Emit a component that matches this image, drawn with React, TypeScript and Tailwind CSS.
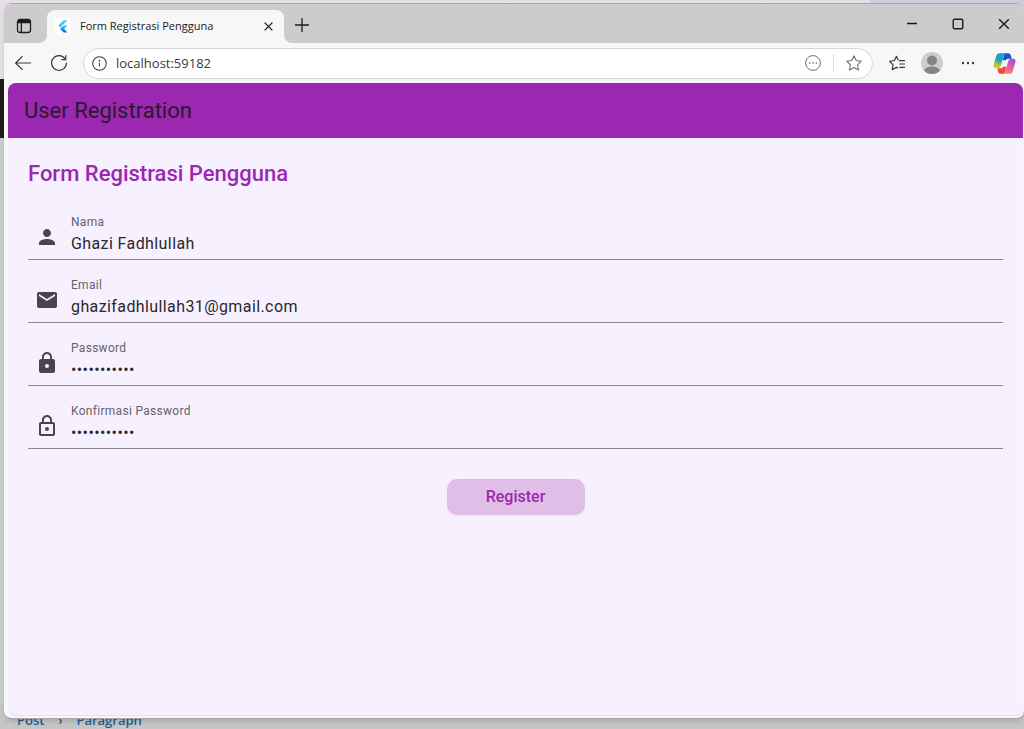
import { useState } from "react"
import type { ChangeEvent, ReactNode } from "react"
import { MdEmail, MdLock, MdLockOutline, MdPerson } from "react-icons/md"

interface FieldProps {
  id: string
  label: string
  type: string
  value: string
  icon: ReactNode
  onChange: (e: ChangeEvent<HTMLInputElement>) => void
}

const Field = ({ id, label, type, value, icon, onChange }: FieldProps) => {
  return (
    <div className="flex h-[50px] items-center border-b border-[#8d8893] text-[#49454f]">
      <span className="flex w-[43px] shrink-0 pl-[7px] pt-1">{icon}</span>
      <div className="flex min-w-0 flex-1 flex-col pt-[2px]">
        <label htmlFor={id} className="text-xs leading-4 tracking-wide text-[#665f6e]">{label}</label>
        <input id={id} name={id} type={type} value={value} onChange={onChange} autoComplete="off" className="h-[27px] w-full bg-transparent text-base tracking-wide text-[#2a272e] outline-none" />
      </div>
    </div>
  )
}

const FlutterLogo = () => (
  <svg viewBox="0 0 16 16" className="size-4 bg-white" aria-hidden="true">
    <path d="M8.700 2.200h3.800L5.200 9.500 3.300 7.600z" fill="#47c5fb" />
    <path d="M8.700 7.400h3.800l-3.500 3.500-1.900 1.900-1.900-1.900z" fill="#3db4f5" />
    <path d="M7.100 9l1.900 1.900-1.900 1.900-1.900-1.900z" fill="#1f8fe6" />
    <path d="M7.100 12.800L9 10.900l3.500 3.500H8.700z" fill="#0b6fc9" />
  </svg>
)

const CopilotLogo = () => (
  <svg viewBox="0 0 24 24" className="size-[23px]" aria-hidden="true">
    <defs>
      <linearGradient id="cpLeft" x1="0.6" y1="0" x2="0.3" y2="1">
        <stop offset="0" stopColor="#1a9be8" />
        <stop offset="0.45" stopColor="#25a3b8" />
        <stop offset="0.75" stopColor="#a3c43c" />
        <stop offset="1" stopColor="#f7c51e" />
      </linearGradient>
      <linearGradient id="cpRight" x1="0.7" y1="0" x2="0.3" y2="1">
        <stop offset="0" stopColor="#a04be8" />
        <stop offset="0.5" stopColor="#e85ba8" />
        <stop offset="1" stopColor="#fb8a5c" />
      </linearGradient>
    </defs>
    <path d="M12 1.200h3.600c1.700 0 2.500.8 2.900 2.300L19.600 7h-3.400c-1.600 0-2.500.6-3.100 1.600h-3z" fill="#1b52c9" />
    <path d="M12 22.800H8.400c-1.700 0-2.500-.8-2.900-2.300L4.400 17h3.400c1.600 0 2.500-.6 3.100-1.600h3z" fill="#f04a3c" />
    <path d="M6.800 1.200h6.600c-1.300.3-1.800 1.300-2.200 2.700L8.300 13.800c-.6 2-1.600 3.200-3.600 3.200H3C.8 17 .1 15.400.7 13.300L3.400 4c.6-1.800 1.500-2.800 3.400-2.800z" fill="url(#cpLeft)" />
    <path d="M17.200 22.800h-6.600c1.300-.3 1.800-1.300 2.200-2.700l2.900-9.900c.6-2 1.600-3.200 3.600-3.200H21c2.200 0 2.900 1.600 2.300 3.700L20.600 20c-.6 1.800-1.500 2.800-3.400 2.800z" fill="url(#cpRight)" />
  </svg>
)

const TitleBar = () => {
  return (
    <div className="flex h-[39px] shrink-0 items-end bg-[#cccccc] text-[#1b1b1b]">
      <div className="flex h-full w-[43px] items-stretch bg-[#f7f7f7]">
        <button type="button" aria-label="Tab actions" className="flex w-full items-center justify-center rounded-br-lg bg-[#cccccc] pr-1 pt-1">
          <svg viewBox="0 0 16 16" className="size-4" fill="none" stroke="currentColor" strokeWidth="1.300">
            <rect x="1.500" y="1.500" width="13" height="13" rx="2.500" />
            <path d="M2 3.500h12" strokeWidth="3.500" />
            <path d="M5.300 5v9.500" />
          </svg>
        </button>
      </div>
      <div className="flex h-[33px] w-[237px] items-center rounded-t-lg bg-[#f7f7f7] px-2 pb-px">
        <FlutterLogo />
        <span className="flex-1 truncate pl-[9px] text-[11px]">Form Registrasi Pengguna</span>
        <button type="button" aria-label="Close tab" className="flex size-4 items-center justify-center">
          <svg viewBox="0 0 10 10" className="size-[9px]" stroke="currentColor" strokeWidth="1.500">
            <path d="M.7.7l8.600 8.600M9.300.7L.7 9.300" />
          </svg>
        </button>
      </div>
      <div className="flex h-full flex-1 bg-[#f7f7f7]">
        <div className="flex flex-1 items-center justify-between rounded-bl-lg bg-[#cccccc] pl-[11px] pr-[14px]">
          <button type="button" aria-label="New tab" className="pt-[2px]">
            <svg viewBox="0 0 14 14" className="size-[14px]" stroke="currentColor" strokeWidth="1.300">
              <path d="M7 0v14M0 7h14" />
            </svg>
          </button>
          <div className="flex items-center gap-[34px]">
            <button type="button" aria-label="Minimize">
              <svg viewBox="0 0 12 12" className="size-3" stroke="currentColor" strokeWidth="1.400">
                <path d="M1 5.500h10" />
              </svg>
            </button>
            <button type="button" aria-label="Maximize">
              <svg viewBox="0 0 12 12" className="size-3" fill="none" stroke="currentColor" strokeWidth="1.400">
                <rect x="1.200" y="1.200" width="9.600" height="9.600" rx="1.500" />
              </svg>
            </button>
            <button type="button" aria-label="Close">
              <svg viewBox="0 0 12 12" className="size-3" stroke="currentColor" strokeWidth="1.400">
                <path d="M1.200 1.200l9.600 9.600M10.800 1.200l-9.600 9.600" />
              </svg>
            </button>
          </div>
        </div>
      </div>
    </div>
  )
}

const Toolbar = ({ url, onUrl }: { url: string; onUrl: (e: ChangeEvent<HTMLInputElement>) => void }) => {
  return (
    <div className="flex h-10 shrink-0 items-center bg-[#f7f7f7] pl-[11px] pr-2 text-[#3a3a3a]">
      <button type="button" aria-label="Back">
        <svg viewBox="0 0 16 16" className="size-4" fill="none" stroke="currentColor" strokeWidth="1.200">
          <path d="M7.500 1.200L.7 8l6.800 6.800M.7 8h15.300" />
        </svg>
      </button>
      <button type="button" aria-label="Refresh" className="ml-5">
        <svg viewBox="0 0 16 16" className="size-4" fill="none" stroke="currentColor" strokeWidth="1.200">
          <path d="M15.400 7.800A7.400 7.400 0 1 1 14 3.600M14.800.3v4.300h-4.300" />
        </svg>
      </button>
      <div className="ml-4 flex h-[31px] flex-1 items-center rounded-full border border-[#d6d6d6] bg-white px-2">
        <svg viewBox="0 0 16 16" className="size-[15px] shrink-0" fill="none" stroke="currentColor" strokeWidth="1.100" aria-hidden="true">
          <circle cx="8" cy="8" r="7.200" />
          <path d="M8 7.200v4" />
          <circle cx="8" cy="5" r=".4" />
        </svg>
        <input aria-label="Address" value={url} onChange={onUrl} className="ml-[9px] min-w-0 flex-1 bg-transparent pt-px text-[13px] outline-none" />
        <button type="button" aria-label="Page options" className="text-[#707070]">
          <svg viewBox="0 0 16 16" className="size-4" fill="none" stroke="currentColor">
            <circle cx="8" cy="8" r="7.400" />
            <path d="M4 8h1.400M7.300 8h1.400M10.600 8h1.400" strokeWidth="1.400" />
          </svg>
        </button>
        <span className="ml-3 h-[18px] w-px bg-[#dddddd]" />
        <button type="button" aria-label="Add to favorites" className="ml-3 mr-[2px] text-[#707070]">
          <svg viewBox="0 0 16 16" className="size-4" fill="none" stroke="currentColor" strokeWidth="1.100" strokeLinejoin="round">
            <path d="M8 .8l2.200 4.700 5.100.7-3.700 3.600.9 5.200L8 12.500 3.500 15l.9-5.200L.7 6.200l5.100-.7z" />
          </svg>
        </button>
      </div>
      <button type="button" aria-label="Favorites" className="ml-4">
        <svg viewBox="0 0 16 16" className="size-4" fill="none" stroke="currentColor" strokeWidth="1.200" strokeLinejoin="round">
          <path d="M9.300 5.300L7.500 1.300 5.400 5.500.6 6.300l3.500 3.500-.9 4.900 4.300-2.300 1.500.8M10 5.600h6M10.300 9h5.700M10.300 12.400h5.700" />
        </svg>
      </button>
      <button type="button" aria-label="Profile" className="ml-4">
        <svg viewBox="0 0 22 22" className="size-[22px]">
          <defs>
            <clipPath id="avatarClip"><circle cx="11" cy="11" r="11" /></clipPath>
          </defs>
          <circle cx="11" cy="11" r="11" fill="#cfcdca" />
          <g clipPath="url(#avatarClip)" fill="#868482">
            <circle cx="11" cy="8.500" r="5" />
            <ellipse cx="11" cy="19.500" rx="8" ry="5" />
          </g>
        </svg>
      </button>
      <button type="button" aria-label="Settings and more" className="ml-[17px]">
        <svg viewBox="0 0 16 16" className="size-4" fill="currentColor">
          <circle cx="3" cy="8" r="1.200" />
          <circle cx="8" cy="8" r="1.200" />
          <circle cx="13" cy="8" r="1.200" />
        </svg>
      </button>
      <button type="button" aria-label="Copilot" className="ml-[17px]">
        <CopilotLogo />
      </button>
    </div>
  )
}

const RegistrationPage = () => {
  const [form, setForm] = useState({
    nama: "Ghazi Fadhlullah",
    email: "ghazifadhlullah31@gmail.com",
    password: "rahasia1234",
    konfirmasi: "rahasia1234",
  })

  const handleChange = (e: ChangeEvent<HTMLInputElement>) => {
    setForm({ ...form, [e.target.name]: e.target.value })
  }

  return (
    <div className="flex flex-1 flex-col overflow-hidden rounded-lg border-b border-[#e3e0e8] bg-[#f7f1ff] font-['Roboto',sans-serif]">
      <header className="flex h-[55px] items-center bg-[#9c27b0] px-4">
        <h1 className="text-[22px] leading-7 text-[#2a1a30]">User Registration</h1>
      </header>
      <main className="p-5">
        <h2 className="text-[22px] font-medium leading-8 text-[#9c27b0]">Form Registrasi Pengguna</h2>
        <form onSubmit={(e) => e.preventDefault()} className="mt-5 flex flex-col gap-[13px]">
          <Field id="nama" label="Nama" type="text" value={form.nama} onChange={handleChange} icon={<MdPerson className="size-6" />} />
          <Field id="email" label="Email" type="text" value={form.email} onChange={handleChange} icon={<MdEmail className="size-6" />} />
          <Field id="password" label="Password" type="password" value={form.password} onChange={handleChange} icon={<MdLock className="size-6" />} />
          <Field id="konfirmasi" label="Konfirmasi Password" type="password" value={form.konfirmasi} onChange={handleChange} icon={<MdLockOutline className="size-6" />} />
          <button type="submit" className="mt-[17px] h-9 w-[138px] self-center rounded-[10px] bg-[#e1bee7] text-base font-medium text-[#9c27b0] shadow-xs">Register</button>
        </form>
      </main>
    </div>
  )
}

export default function App() {
  const [url, setUrl] = useState("localhost:59182")

  return (
    <div className="relative flex h-screen overflow-hidden pl-1 pt-[3px] pb-[10px] font-['Open_Sans','Noto_Sans',sans-serif]">
      {/* whatever is open behind the browser window */}
      <div className="absolute inset-0 flex flex-col bg-[#d8cfdd]">
        <div className="h-[79px] bg-linear-to-r from-[#e6dfe9] from-85% to-[#d3c9db] to-85%" />
        <div className="h-[59px] bg-[#1f1c1c]" />
        <div className="flex-1 bg-[#c9cfd1]" />
        <div className="flex h-[26px] items-end bg-[#c6c6c6] pl-[17px] text-[13px] font-semibold leading-[18px] text-[#1f6391]">
          <span>Post</span>
          <span className="w-8 text-center">›</span>
          <span>Paragraph</span>
        </div>
      </div>
      <div className="relative flex flex-1 flex-col overflow-hidden rounded-lg border-y border-[#a9a6ab] bg-[#f7f7f7] shadow-md">
        <TitleBar />
        <Toolbar url={url} onUrl={(e) => setUrl(e.target.value)} />
        <div className="flex flex-1 pb-[2px] pl-1 pr-px">
          <RegistrationPage />
        </div>
      </div>
    </div>
  )
}
